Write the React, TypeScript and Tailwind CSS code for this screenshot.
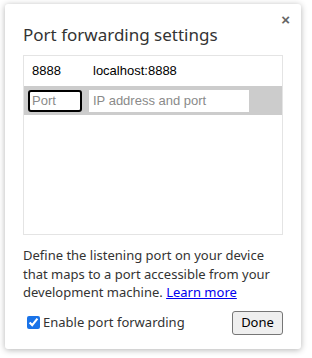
import React from "react";

export default function App() {
  return (
    <div className="w-[312px] h-[358px] bg-white pt-[4px] pl-[5px]" style={{ fontFamily: '"Noto Sans", sans-serif' }}>
      <div className="relative w-[296px] h-[345px] bg-white rounded-[3px] shadow-[0_1px_6px_rgba(0,0,0,0.3)] pl-[18px] pr-[18px] pt-[19px]">
        <div className="absolute right-[11px] top-[8px] text-[#666] text-[15px] font-bold leading-none" style={{ fontFamily: '"Liberation Sans", sans-serif' }}>×</div>
        <div className="text-[17px] leading-[24px] text-[#333]">Port forwarding settings</div>
        <div className="mt-[8px] h-[180px] border border-[#e4e4e4]" style={{ fontFamily: '"Liberation Sans", Arial, sans-serif' }}>
          <div className="h-[30px] flex items-center text-[13px] text-black">
            <span className="pl-[8px] w-[69px]">8888</span>
            <span>localhost:8888</span>
          </div>
          <div className="h-[29px] bg-[#cccccc] flex items-center pl-[4px]">
            <input className="w-[54px] h-[22px] border-2 border-black rounded-[3px] bg-white px-[2px] text-[13px] outline-none placeholder:text-[#8a8a8a]" placeholder="Port" />
            <input className="ml-[7px] w-[160px] h-[22px] bg-white px-[4px] text-[13px] outline-none placeholder:text-[#8a8a8a]" placeholder="IP address and port" />
          </div>
        </div>
        <div className="mt-[11px] text-[13px] leading-[18.5px] text-[#333]">
          Define the listening port on your device that maps to a port accessible from your development machine.{" "}
          <a className="text-[#0000ee] underline">Learn more</a>
        </div>
        <div className="mt-[9px] flex items-center justify-between">
          <label className="flex items-center pl-[4px] text-[13px] text-[#333]">
            <input type="checkbox" defaultChecked className="w-[13px] h-[13px] m-0 accent-[#1a73e8]" />
            <span className="ml-[3px]">Enable port forwarding</span>
          </label>
          <button className="w-[51px] h-[24px] bg-[#efefef] border border-[#767676] rounded-[3px] text-[13px] text-black">Done</button>
        </div>
      </div>
    </div>
  );
}
